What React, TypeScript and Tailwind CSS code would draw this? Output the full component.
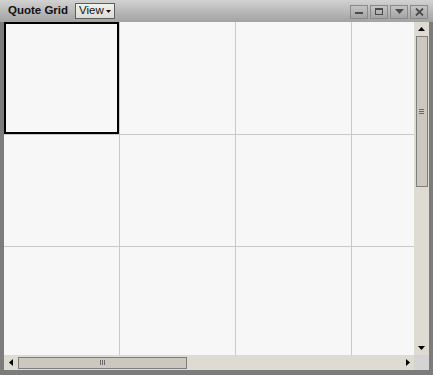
import React from 'react';

const cols = [115, 115, 115, 62];
const rows = [112, 111, 108];

const WinButton: React.FC<{ children: React.ReactNode }> = ({ children }) => (
  <div className="w-[18px] h-[14px] border border-[#8a8a8a] bg-gradient-to-b from-[#c4c4c4] to-[#a4a4a4] flex items-center justify-center">
    {children}
  </div>
);

const App: React.FC = () => {
  return (
    <div
      className="w-[433px] h-[375px] bg-[#7c7c7c] flex flex-col overflow-hidden"
      style={{ fontFamily: '"Liberation Sans", Arial, sans-serif' }}
    >
      {/* Title bar */}
      <div className="h-[22px] bg-gradient-to-b from-[#d2d2d2] to-[#a2a2a2] flex items-center pl-[8px] pr-[5px]">
        <span className="text-[11.5px] font-bold text-[#111] leading-none">Quote Grid</span>
        <div className="ml-[7px] h-[16px] px-[3px] border border-[#5e5e5e] bg-gradient-to-b from-[#f2f2ec] to-[#dcdcd4] flex items-center gap-[2px] text-[11.5px] text-[#111] leading-none">
          View
          <svg width="5" height="3" viewBox="0 0 5 3"><path d="M0 0h5L2.5 3z" fill="#111" /></svg>
        </div>
        <div className="ml-auto flex gap-[2px] pt-[1px]">
          <WinButton><div className="w-[8px] h-[2px] bg-[#4a4a4a] mt-[3px]" /></WinButton>
          <WinButton><div className="w-[8px] h-[7px] border border-[#4a4a4a] border-t-2" /></WinButton>
          <WinButton>
            <svg width="9" height="5" viewBox="0 0 9 5"><path d="M0 0h9L4.5 5z" fill="#4a4a4a" /></svg>
          </WinButton>
          <WinButton>
            <svg width="9" height="8" viewBox="0 0 9 8"><path d="M1 0.5l7 7M8 0.5l-7 7" stroke="#4a4a4a" strokeWidth="1.8" /></svg>
          </WinButton>
        </div>
      </div>

      {/* Body */}
      <div className="flex-1 flex ml-[4px] mr-[4px] mb-[5px] min-h-0">
        <div className="w-[410px] flex flex-col">
          <div className="flex-1 bg-[#f7f7f7] overflow-hidden">
            {rows.map((h, r) => (
              <div key={r} className="flex border-b border-[#c8c8c8]" style={{ height: h + 1 }}>
                {cols.map((w, c) => (
                  <div
                    key={c}
                    className="shrink-0 h-full border-r border-[#c8c8c8]"
                    style={{ width: w + 1 }}
                  >
                    {r === 0 && c === 0 && <div className="h-full border-2 border-black" />}
                  </div>
                ))}
              </div>
            ))}
          </div>
          {/* Horizontal scrollbar */}
          <div className="h-[15px] bg-[#dedbd3] flex items-center">
            <div className="w-[14px] flex justify-center">
              <svg width="4" height="7" viewBox="0 0 4 7"><path d="M4 0v7L0 3.5z" fill="#000" /></svg>
            </div>
            <div className="w-[169px] h-[12px] border border-[#7e7e7e] bg-[#cdc8bf] flex items-center justify-center">
              <div className="w-[1px] h-[5px] bg-[#6a6a6a]" />
              <div className="w-[1px] h-[5px] bg-[#6a6a6a] ml-[1px]" />
              <div className="w-[1px] h-[5px] bg-[#6a6a6a] ml-[1px]" />
            </div>
            <div className="flex-1" />
            <div className="w-[12px] flex justify-center">
              <svg width="4" height="7" viewBox="0 0 4 7"><path d="M0 0v7L4 3.5z" fill="#000" /></svg>
            </div>
          </div>
        </div>
        <div className="w-[15px] flex flex-col">
          {/* Vertical scrollbar */}
          <div className="flex-1 bg-[#dedbd3] flex flex-col items-center">
            <div className="h-[14px] flex items-center">
              <svg width="7" height="4" viewBox="0 0 7 4"><path d="M0 4h7L3.5 0z" fill="#000" /></svg>
            </div>
            <div className="w-[12px] h-[151px] border border-[#7e7e7e] bg-[#cdc8bf] flex flex-col items-center justify-center">
              <div className="w-[5px] h-[1px] bg-[#6a6a6a]" />
              <div className="w-[5px] h-[1px] bg-[#6a6a6a] mt-[1px]" />
              <div className="w-[5px] h-[1px] bg-[#6a6a6a] mt-[1px]" />
            </div>
            <div className="flex-1" />
            <div className="h-[14px] flex items-center">
              <svg width="7" height="4" viewBox="0 0 7 4"><path d="M0 0h7L3.5 4z" fill="#000" /></svg>
            </div>
          </div>
          <div className="h-[15px] bg-[#d4d4d4]" />
        </div>
      </div>
    </div>
  );
};

export default App;
